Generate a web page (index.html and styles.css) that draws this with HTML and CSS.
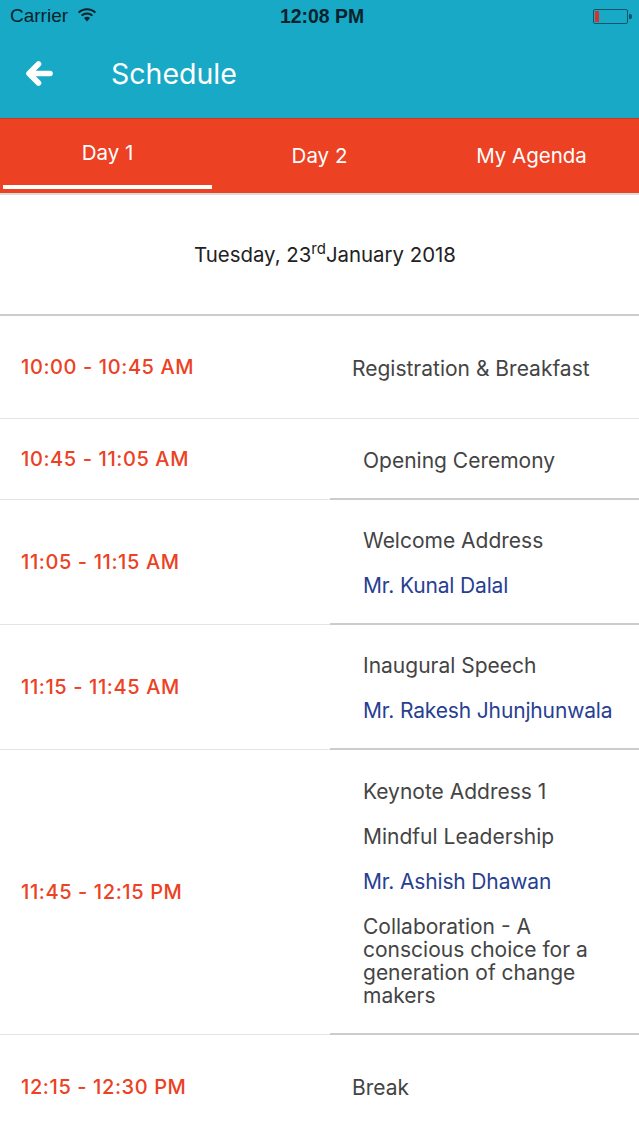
FILE: index.html
```html
<!DOCTYPE html>
<html lang="en">
<head>
<meta charset="utf-8">
<title>Schedule</title>
<link rel="stylesheet" href="styles.css">
</head>
<body>
<header class="appbar">
  <div class="status">
    <div class="status-left">
      <span class="carrier">Carrier</span>
      <svg class="wifi" width="20" height="14" viewBox="0 0 20 14"><path d="M10 13.5 L7 10 A4.6 4.6 0 0 1 13 10 Z" fill="#07222c"/><path d="M4.6 7.6 A7.8 7.8 0 0 1 15.4 7.6" fill="none" stroke="#07222c" stroke-width="2"/><path d="M1.6 4.6 A12 12 0 0 1 18.4 4.6" fill="none" stroke="#07222c" stroke-width="2"/></svg>
    </div>
    <span class="clock">12:08 PM</span>
    <div class="battery"><span class="battery-level"></span><span class="battery-tip"></span></div>
  </div>
  <div class="titlebar">
    <svg class="back" width="30" height="30" viewBox="0 0 30 30"><path d="M14.5 5 L5 14.5 L14.5 24 M6 14.5 H26" fill="none" stroke="#fff" stroke-width="5.6" stroke-linecap="round" stroke-linejoin="round"/></svg>
    <h1 class="title">Schedule</h1>
  </div>
</header>
<nav class="tabs">
  <div class="tab tab-active">Day 1</div>
  <div class="tab">Day 2</div>
  <div class="tab">My Agenda</div>
</nav>
<main>
  <div class="date">Tuesday, 23<sup class="ord">rd</sup>January 2018</div>
  <section class="row row-1 row-plain">
    <div class="time">10:00 - 10:45 AM</div>
    <div class="detail detail-wide"><p>Registration &amp; Breakfast</p></div>
  </section>
  <section class="row row-2">
    <div class="time">10:45 - 11:05 AM</div>
    <div class="detail"><p>Opening Ceremony</p></div>
  </section>
  <section class="row row-3">
    <div class="time">11:05 - 11:15 AM</div>
    <div class="detail"><p>Welcome Address</p><p class="speaker">Mr. Kunal Dalal</p></div>
  </section>
  <section class="row row-3">
    <div class="time">11:15 - 11:45 AM</div>
    <div class="detail"><p>Inaugural Speech</p><p class="speaker">Mr. Rakesh Jhunjhunwala</p></div>
  </section>
  <section class="row row-5">
    <div class="time">11:45 - 12:15 PM</div>
    <div class="detail"><p>Keynote Address 1</p><p>Mindful Leadership</p><p class="speaker">Mr. Ashish Dhawan</p><p>Collaboration - A conscious choice for a generation of change makers</p></div>
  </section>
  <section class="row row-6 row-last">
    <div class="time">12:15 - 12:30 PM</div>
    <div class="detail detail-wide"><p>Break</p></div>
  </section>
</main>
</body>
</html>
```
FILE: styles.css
```css
* { box-sizing: border-box; }
html, body { margin: 0; padding: 0; }
body { width: 639px; height: 1136px; overflow: hidden; background: #fff; font-family: "Inter", "Open Sans", sans-serif; }
.appbar { height: 118px; background: #17a9c5; }
.status { height: 32px; display: flex; align-items: center; justify-content: space-between; padding: 0 10px; position: relative; font-family: "Liberation Sans", sans-serif; color: #07222c; font-size: 19px; }
.status-left { display: flex; align-items: center; gap: 9px; }
.wifi { margin-top: -3px; }
.clock { position: absolute; left: 280px; top: 5px; font-weight: 700; font-size: 19.4px; }
.battery { width: 35px; height: 15px; border: 1px solid #0b5566; border-radius: 2px; margin-right: 1px; position: relative; }
.battery-level { display: block; width: 4px; height: 11px; margin: 1px; background: #d9302c; }
.battery-tip { position: absolute; right: -5px; top: 4px; width: 3px; height: 5px; background: #0b5566; border-radius: 0 2px 2px 0; }
.titlebar { height: 86px; display: flex; align-items: center; padding: 0 0 3px 24px; }
.title { margin: 0 0 0 57px; font-size: 28.5px; font-weight: 400; color: #fff; }
.tabs { height: 77px; display: flex; gap: 3px; background: #ec4123; border-top: 1px solid #c53a1f; border-bottom: 2px solid #ddd; padding-left: 3px; }
.tab { color: #fff; font-size: 20.5px; text-align: center; padding-top: 24px; width: 209px; position: relative; }
.tab-active { padding-top: 21px; }
.tab-active::after { content: ""; position: absolute; left: 0; right: 0; top: 66px; height: 4px; background: #fff; }
.date { height: 121px; border-bottom: 2px solid #ccc; text-align: center; font-size: 20.4px; color: #222; padding: 47px 0 0 11px; }
.ord { font-size: 15px; line-height: 0; }
.row { display: flex; }
.time { width: 330px; padding-left: 21px; display: flex; align-items: center; color: #ec4123; font-size: 20px; font-weight: 450; letter-spacing: .6px; border-bottom: 1px solid #e4e4e4; }
.detail { flex: 1; padding: 3px 20px 0 33px; display: flex; flex-direction: column; justify-content: center; gap: 22px; color: #444; font-size: 21px; line-height: 23px; border-bottom: 2px solid #ccc; }
.detail p { margin: 0; }
.detail-wide { padding-left: 22px; }
.detail .speaker { color: #283f91; letter-spacing: -.15px; }
.row-1 { height: 103px; }
.row-2 { height: 81px; }
.row-3 { height: 125px; }
.row-5 { height: 285px; }
.row-6 { height: 102px; }
.row-plain .detail { border-bottom: 1px solid #e4e4e4; }
.row-last .time, .row-last .detail { border-bottom: 0; }
.row-last .time { padding-top: 2px; }
```
